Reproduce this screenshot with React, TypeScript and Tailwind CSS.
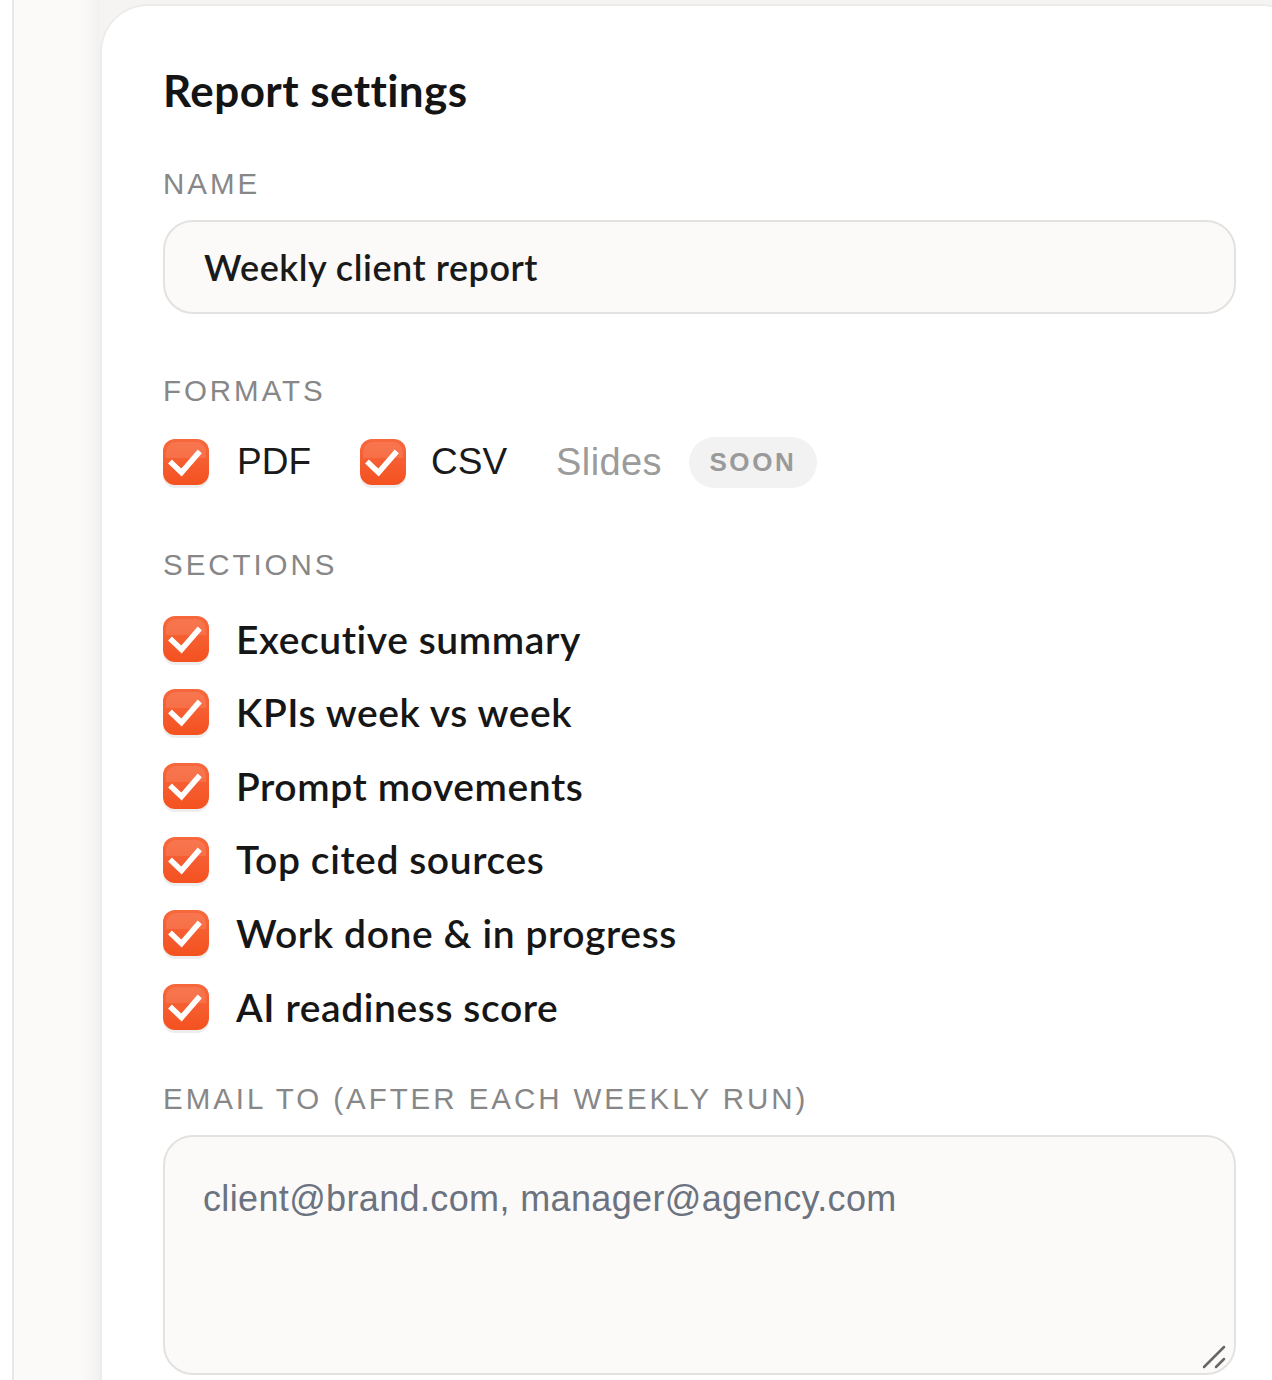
import React from 'react';

const jost = { fontFamily: 'Lato, "Noto Sans", sans-serif' };
const helv = { fontFamily: '"Liberation Sans", Arial, sans-serif' };

const sections = [
  'Executive summary',
  'KPIs week vs week',
  'Prompt movements',
  'Top cited sources',
  'Work done & in progress',
  'AI readiness score',
];

function Check() {
  return (
    <span className="relative flex h-[46px] w-[46px] shrink-0 items-center justify-center rounded-[12px] bg-gradient-to-b from-[#f7683d] to-[#f4511f] shadow-[0_3px_0_rgba(0,0,0,0.07)]">
      <span className="absolute inset-x-[3px] top-[3px] h-[16px] rounded-t-[10px] bg-white/10" />
      <svg width="46" height="46" viewBox="0 0 46 46" className="relative">
        <path d="M9 24.5 L18.5 33.5 L35 14.5" fill="none" stroke="white" strokeWidth="5.5" strokeLinecap="square" strokeLinejoin="miter" />
      </svg>
    </span>
  );
}

function Label({ children, className = '' }: { children: React.ReactNode; className?: string }) {
  return (
    <div style={helv} className={`h-[32px] text-[29.5px] leading-[32px] tracking-[0.1em] text-[#878787] ${className}`}>
      {children}
    </div>
  );
}

export default function App() {
  return (
    <div className="flex h-[1380px] w-[1272px] overflow-hidden bg-[#f5f4f2]">
      <div className="w-[12px] shrink-0 bg-white" />
      <div className="w-[88px] shrink-0 border-l-2 border-[#e9e8e6] bg-gradient-to-r from-[#fbfaf8] from-80% to-[#f2f1ef]" />
      <div className="mt-[4px] flex w-[1210px] shrink-0 flex-col rounded-tl-[48px] rounded-tr-[48px] border-2 border-b-0 border-[#ececec] bg-white pl-[61px] pt-[60px]">
        <h1 style={jost} className="h-[48px] text-[44px] font-bold leading-[48px] tracking-[0.01em] text-[#141414]">
          Report settings
        </h1>

        <Label className="mt-[54px]">NAME</Label>
        <div className="mt-[20px] flex h-[94px] w-[1073px] items-center rounded-[30px] border-2 border-[#e3e2e0] bg-[#fbfaf9] px-[39px]">
          <span style={jost} className="text-[36px] font-semibold tracking-[0.015em] text-[#1a1a1a]">
            Weekly client report
          </span>
        </div>

        <Label className="mt-[61px]">FORMATS</Label>
        <div className="mt-[29px] flex h-[52px] items-center">
          <Check />
          <span style={helv} className="ml-[28px] text-[37px] text-[#1a1a1a]">PDF</span>
          <span className="ml-[49px]">
            <Check />
          </span>
          <span style={helv} className="ml-[25px] text-[37px] text-[#1a1a1a]">CSV</span>
          <span style={helv} className="ml-[49px] text-[38px] tracking-[0.01em] text-[#9b9b9b]">Slides</span>
          <span
            style={helv}
            className="ml-[27px] flex h-[51px] w-[128px] items-center justify-center rounded-full bg-[#f2f2f2] text-[26px] font-bold tracking-[0.1em] text-[#9a9a9a]"
          >
            SOON
          </span>
        </div>

        <Label className="mt-[61px]">SECTIONS</Label>
        <div className="mt-[21px] flex flex-col">
          {sections.map((s) => (
            <div key={s} className="flex h-[73.6px] items-center">
              <Check />
              <span style={jost} className="ml-[27px] text-[39px] font-semibold tracking-[0.015em] text-[#161616]">
                {s}
              </span>
            </div>
          ))}
        </div>

        <Label className="mt-[39px]">EMAIL TO (AFTER EACH WEEKLY RUN)</Label>
        <div className="relative mt-[20px] h-[240px] w-[1073px]">
          <textarea
            style={helv}
            placeholder="client@brand.com, manager@agency.com"
            className="h-full w-full resize-none rounded-[30px] border-2 border-[#e3e2e0] bg-[#fbfaf9] px-[38px] pt-[42px] text-[36px] leading-[40px] tracking-[0.01em] outline-none placeholder:text-[#6b7280]"
          />
          <svg width="26" height="26" viewBox="0 0 26 26" className="absolute bottom-[6px] right-[8px]">
            <path d="M2 24 L22 4 M14 24 L22 16" stroke="#666" strokeWidth="2.5" strokeLinecap="round" />
          </svg>
        </div>
      </div>
    </div>
  );
}
